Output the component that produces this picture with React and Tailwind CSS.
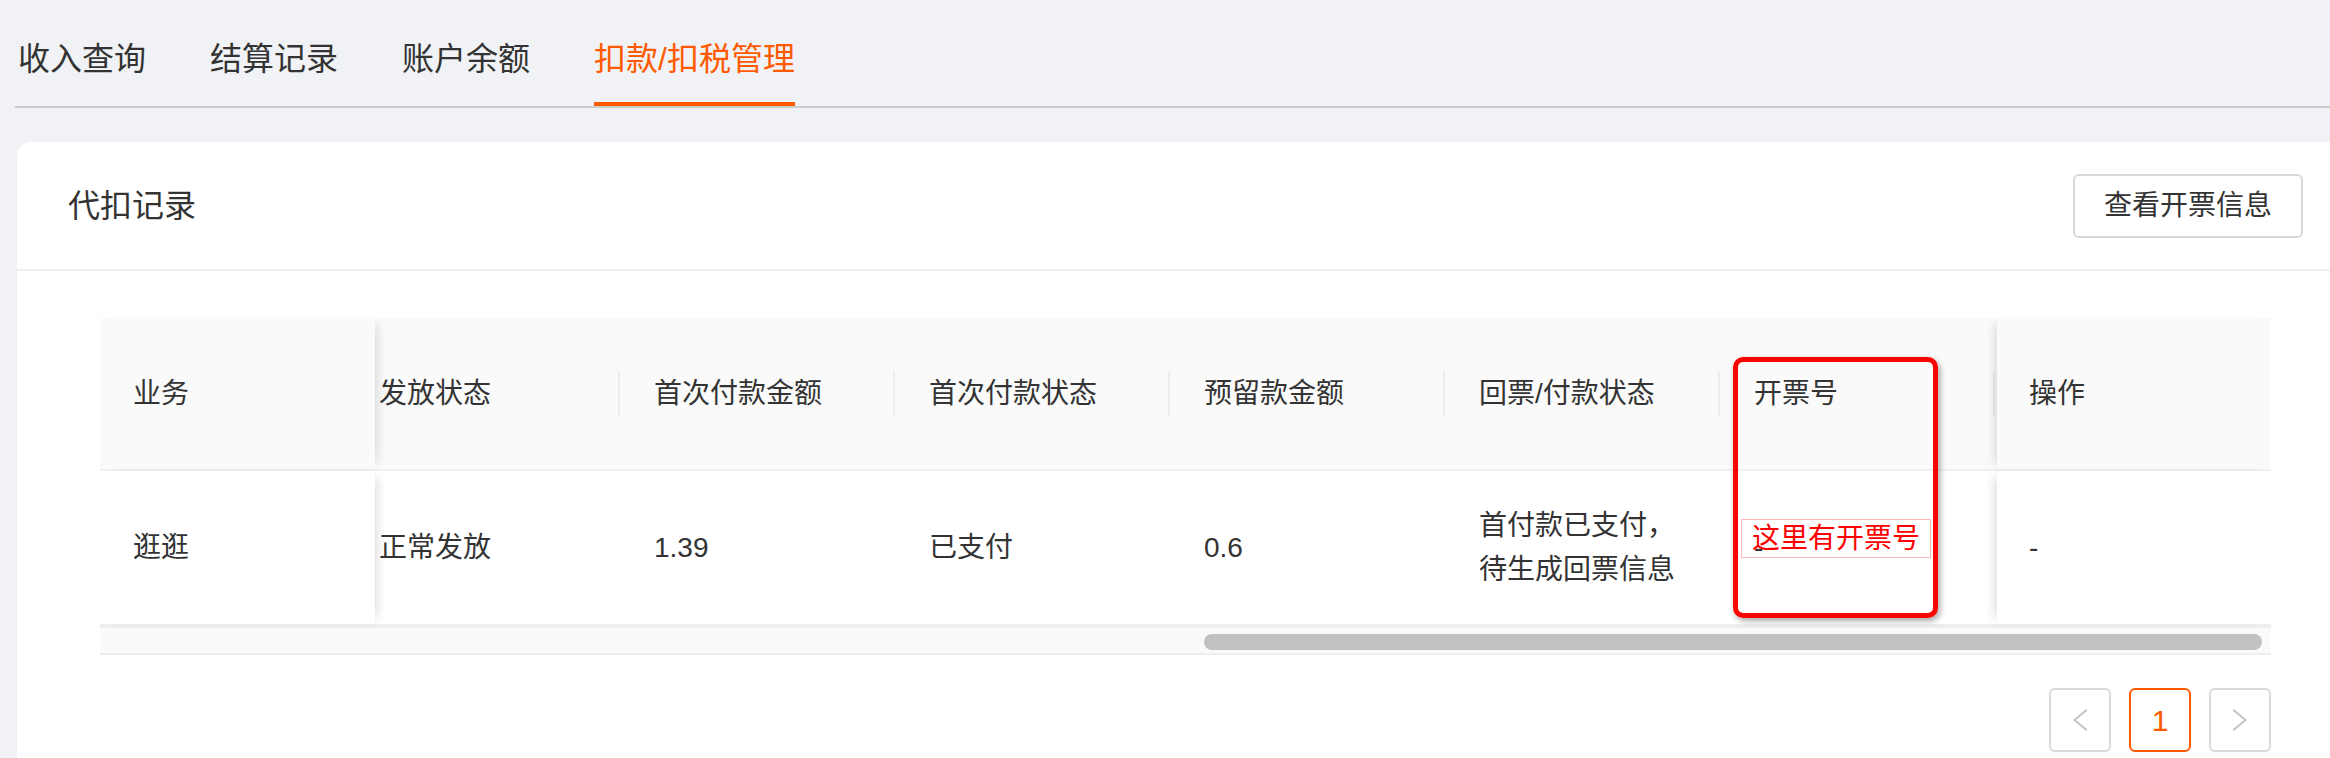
import { useState } from 'react';

const tabs = ['收入查询', '结算记录', '账户余额', '扣款/扣税管理'];

const columns = [
  { title: '发放状态', value: '正常发放' },
  { title: '首次付款金额', value: '1.39' },
  { title: '首次付款状态', value: '已支付' },
  { title: '预留款金额', value: '0.6' },
  { title: '回票/付款状态', value: ['首付款已支付，', '待生成回票信息'] },
  { title: '开票号', value: '-' },
];

function Chevron({ dir }) {
  return (
    <svg width="16" height="24" viewBox="0 0 16 24" fill="none">
      <path
        d={dir === 'left' ? 'M14 2.5 L2.5 12 L14 21.5' : 'M2 2.5 L13.5 12 L2 21.5'}
        stroke="#c4c4c4"
        strokeWidth="2.2"
        strokeLinecap="round"
        strokeLinejoin="round"
      />
    </svg>
  );
}

function TableRow({ header }) {
  const bg = header ? 'bg-[#fafafa]' : 'bg-white';
  return (
    <div className={`flex h-[153px] ${bg} ${header ? 'border-b-2 border-[#f0f0f0]' : ''}`}>
      {/* fixed left column */}
      <div className={`relative z-10 flex w-[275px] shrink-0 items-center pl-[33px] ${bg} shadow-[8px_0_10px_-6px_rgba(0,0,0,0.14)]`}>
        {header ? '业务' : '逛逛'}
      </div>

      {/* scrolled middle */}
      <div className="flex-1 overflow-hidden">
        <div className="-ml-[30px] flex h-full">
          {columns.map((c) => (
            <div key={c.title} className="flex h-full w-[275px] shrink-0 items-center pl-[34px]">
              {header ? (
                <>
                  <span>{c.title}</span>
                  <div className="ml-auto h-[45px] w-[2px] bg-[#ececec]" />
                </>
              ) : Array.isArray(c.value) ? (
                <div className="leading-[44px]">
                  {c.value.map((l) => (
                    <div key={l}>{l}</div>
                  ))}
                </div>
              ) : (
                <span>{c.value}</span>
              )}
            </div>
          ))}
        </div>
      </div>

      {/* fixed right column */}
      <div className={`relative z-10 flex w-[274px] shrink-0 items-center pl-[32px] ${bg} shadow-[-8px_0_10px_-6px_rgba(0,0,0,0.14)]`}>
        {header ? '操作' : '-'}
      </div>
    </div>
  );
}

export default function App() {
  const [active, setActive] = useState(3);
  const [page] = useState(1);

  return (
    <div className="flex h-[758px] w-[2330px] flex-col overflow-hidden bg-[#f0f2f5] font-['Liberation_Sans','Noto_Sans_CJK_SC',sans-serif] text-[#333]">
      {/* tabs */}
      <div className="ml-[15px] flex gap-[64px] border-b-2 border-[#cccccc] pl-[3px]">
        {tabs.map((t, i) => (
          <button
            key={t}
            onClick={() => setActive(i)}
            className={`border-b-4 pt-[37px] pb-[21px] text-[32px] leading-[44px] ${
              i === active ? 'border-[#ff5a00] text-[#ff5a00]' : 'border-transparent text-[#333]'
            }`}
          >
            {t}
          </button>
        ))}
      </div>

      {/* card */}
      <div className="ml-[17px] mt-[34px] flex w-[2337px] flex-1 flex-col rounded-tl-[14px] rounded-tr-[14px] bg-white">
        <div className="flex h-[129px] shrink-0 items-center justify-between border-b-2 border-[#efefef] px-[51px]">
          <h2 className="text-[32px] text-[#333]">代扣记录</h2>
          <button className="h-[64px] w-[230px] rounded-[6px] border-2 border-[#d9d9d9] bg-white text-[28px] text-[#333]">
            查看开票信息
          </button>
        </div>

        <div className="px-[83px] pt-[47px]">
          <div className="relative text-[28px] text-[#333]">
            <TableRow header />
            <TableRow />

            {/* horizontal scrollbar */}
            <div className="h-[31px] border-t-4 border-b-2 border-[#eeeeee] bg-[#fafafa]">
              <div className="ml-[1104px] mt-[6px] h-[16px] w-[1058px] rounded-full bg-[#c1c1c1]" />
            </div>

            {/* annotation */}
            <div className="pointer-events-none absolute left-[1633px] top-[39px] z-20 h-[261px] w-[205px] rounded-[10px] border-[5px] border-[#ff0000] shadow-[2px_3px_6px_rgba(0,0,0,0.35)]" />
            <div className="absolute left-[1641px] top-[201px] z-20 flex h-[39px] w-[190px] items-center justify-center border border-[#ffb8b8] text-[28px] leading-none text-[#ff0000]">
              这里有开票号
            </div>
          </div>

          {/* pagination */}
          <div className="mt-[33px] flex justify-end gap-[18px]">
            <button className="flex h-[64px] w-[62px] items-center justify-center rounded-[6px] border-2 border-[#d9d9d9]">
              <Chevron dir="left" />
            </button>
            <button className="flex h-[64px] w-[62px] items-center justify-center rounded-[6px] border-2 border-[#ff5a00] text-[30px] text-[#ff5a00]">
              {page}
            </button>
            <button className="flex h-[64px] w-[62px] items-center justify-center rounded-[6px] border-2 border-[#d9d9d9]">
              <Chevron dir="right" />
            </button>
          </div>
        </div>
      </div>
    </div>
  );
}
